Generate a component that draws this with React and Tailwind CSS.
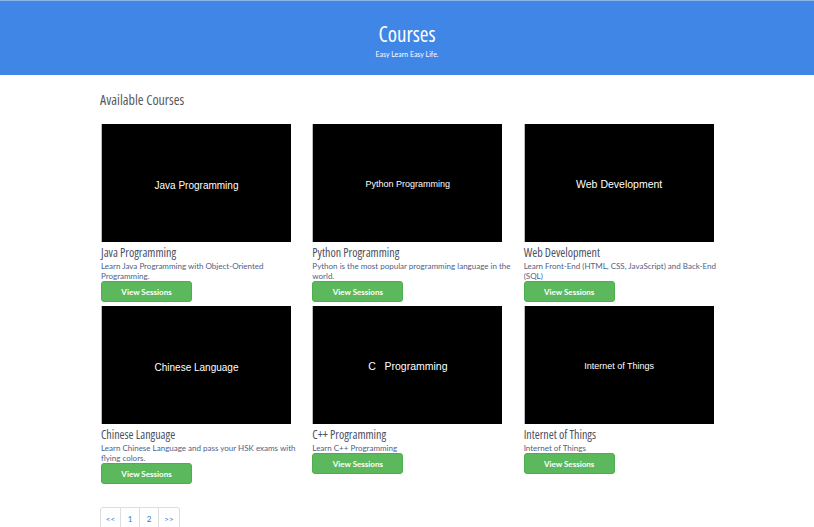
const courses = [
  { title: 'Java Programming', thumb: 'Java Programming', size: 'text-[10px]', desc: 'Learn Java Programming with Object-Oriented Programming.' },
  { title: 'Python Programming', thumb: 'Python Programming', size: 'text-[9px]', desc: 'Python is the most popular programming language in the world.' },
  { title: 'Web Development', thumb: 'Web Development', size: 'text-[10.5px]', desc: 'Learn Front-End (HTML, CSS, JavaScript) and Back-End (SQL)' },
  { title: 'Chinese Language', thumb: 'Chinese Language', size: 'text-[10px]', desc: 'Learn Chinese Language and pass your HSK exams with flying colors.' },
  { title: 'C++ Programming', thumb: 'C   Programming', size: 'text-[10.5px]', desc: 'Learn C++ Programming' },
  { title: 'Internet of Things', thumb: 'Internet of Things', size: 'text-[9px]', desc: 'Internet of Things' },
];

// Oswald-like condensed face
const narrow = "font-['Open_Sans',sans-serif] [font-stretch:75%]";

const CourseCard = ({ course }) => (
  <div className="flex flex-col items-start">
    <div className="w-[190px] h-[118px] bg-black border-l border-[#bbb] flex items-center justify-center pt-[4px]">
      <span className={`text-white font-['Liberation_Sans',sans-serif] whitespace-pre ${course.size}`}>{course.thumb}</span>
    </div>
    <h3 className={`mt-[3px] text-[12px] leading-[16px] font-normal text-[#4b4f63] whitespace-nowrap ${narrow}`}>
      {course.title}
    </h3>
    <p className="w-[200px] text-[8px] leading-[10px] text-[#4f6185] font-['Lato',sans-serif]">{course.desc}</p>
    <button className="w-[91px] h-[21px] rounded-[3px] bg-[#5cb85c] border border-[#4cae4c] text-white text-[8px] font-bold font-['Lato',sans-serif]">
      View Sessions
    </button>
  </div>
);

export default function App() {
  return (
    <div className="min-h-screen bg-white font-['Lato',sans-serif]">
      {/* Header */}
      <div className="h-[75px] bg-[#3f86e6] border-t border-[#8fb4ea] flex flex-col items-center">
        <h1 className={`mt-[19px] text-[21px] leading-[28px] font-medium text-white ${narrow}`}>Courses</h1>
        <p className="mt-[1px] text-[7px] leading-[10px] text-white">Easy Learn Easy Life.</p>
      </div>

      <div className="w-[614px] mx-auto">
        <h2 className={`mt-[16px] text-[14px] leading-[18px] font-medium text-[#5a5a5a] ${narrow}`}>Available Courses</h2>

        <div className="mt-[15px] grid grid-cols-3 gap-x-[21px] gap-y-[4px] pl-[1px]">
          {courses.map((c) => (
            <CourseCard key={c.title} course={c} />
          ))}
        </div>

        {/* Pagination */}
        <div className="mt-[23px] flex text-[8px] text-[#337ab7]">
          <span className="w-[21px] h-[24px] flex items-center justify-center border border-[#ddd] rounded-l-[3px]">&lt;&lt;</span>
          <span className="w-[19px] h-[24px] flex items-center justify-center border border-l-0 border-[#ddd]">1</span>
          <span className="w-[19px] h-[24px] flex items-center justify-center border border-l-0 border-[#ddd]">2</span>
          <span className="w-[21px] h-[24px] flex items-center justify-center border border-l-0 border-[#ddd] rounded-r-[3px]">&gt;&gt;</span>
        </div>
      </div>
    </div>
  );
}
